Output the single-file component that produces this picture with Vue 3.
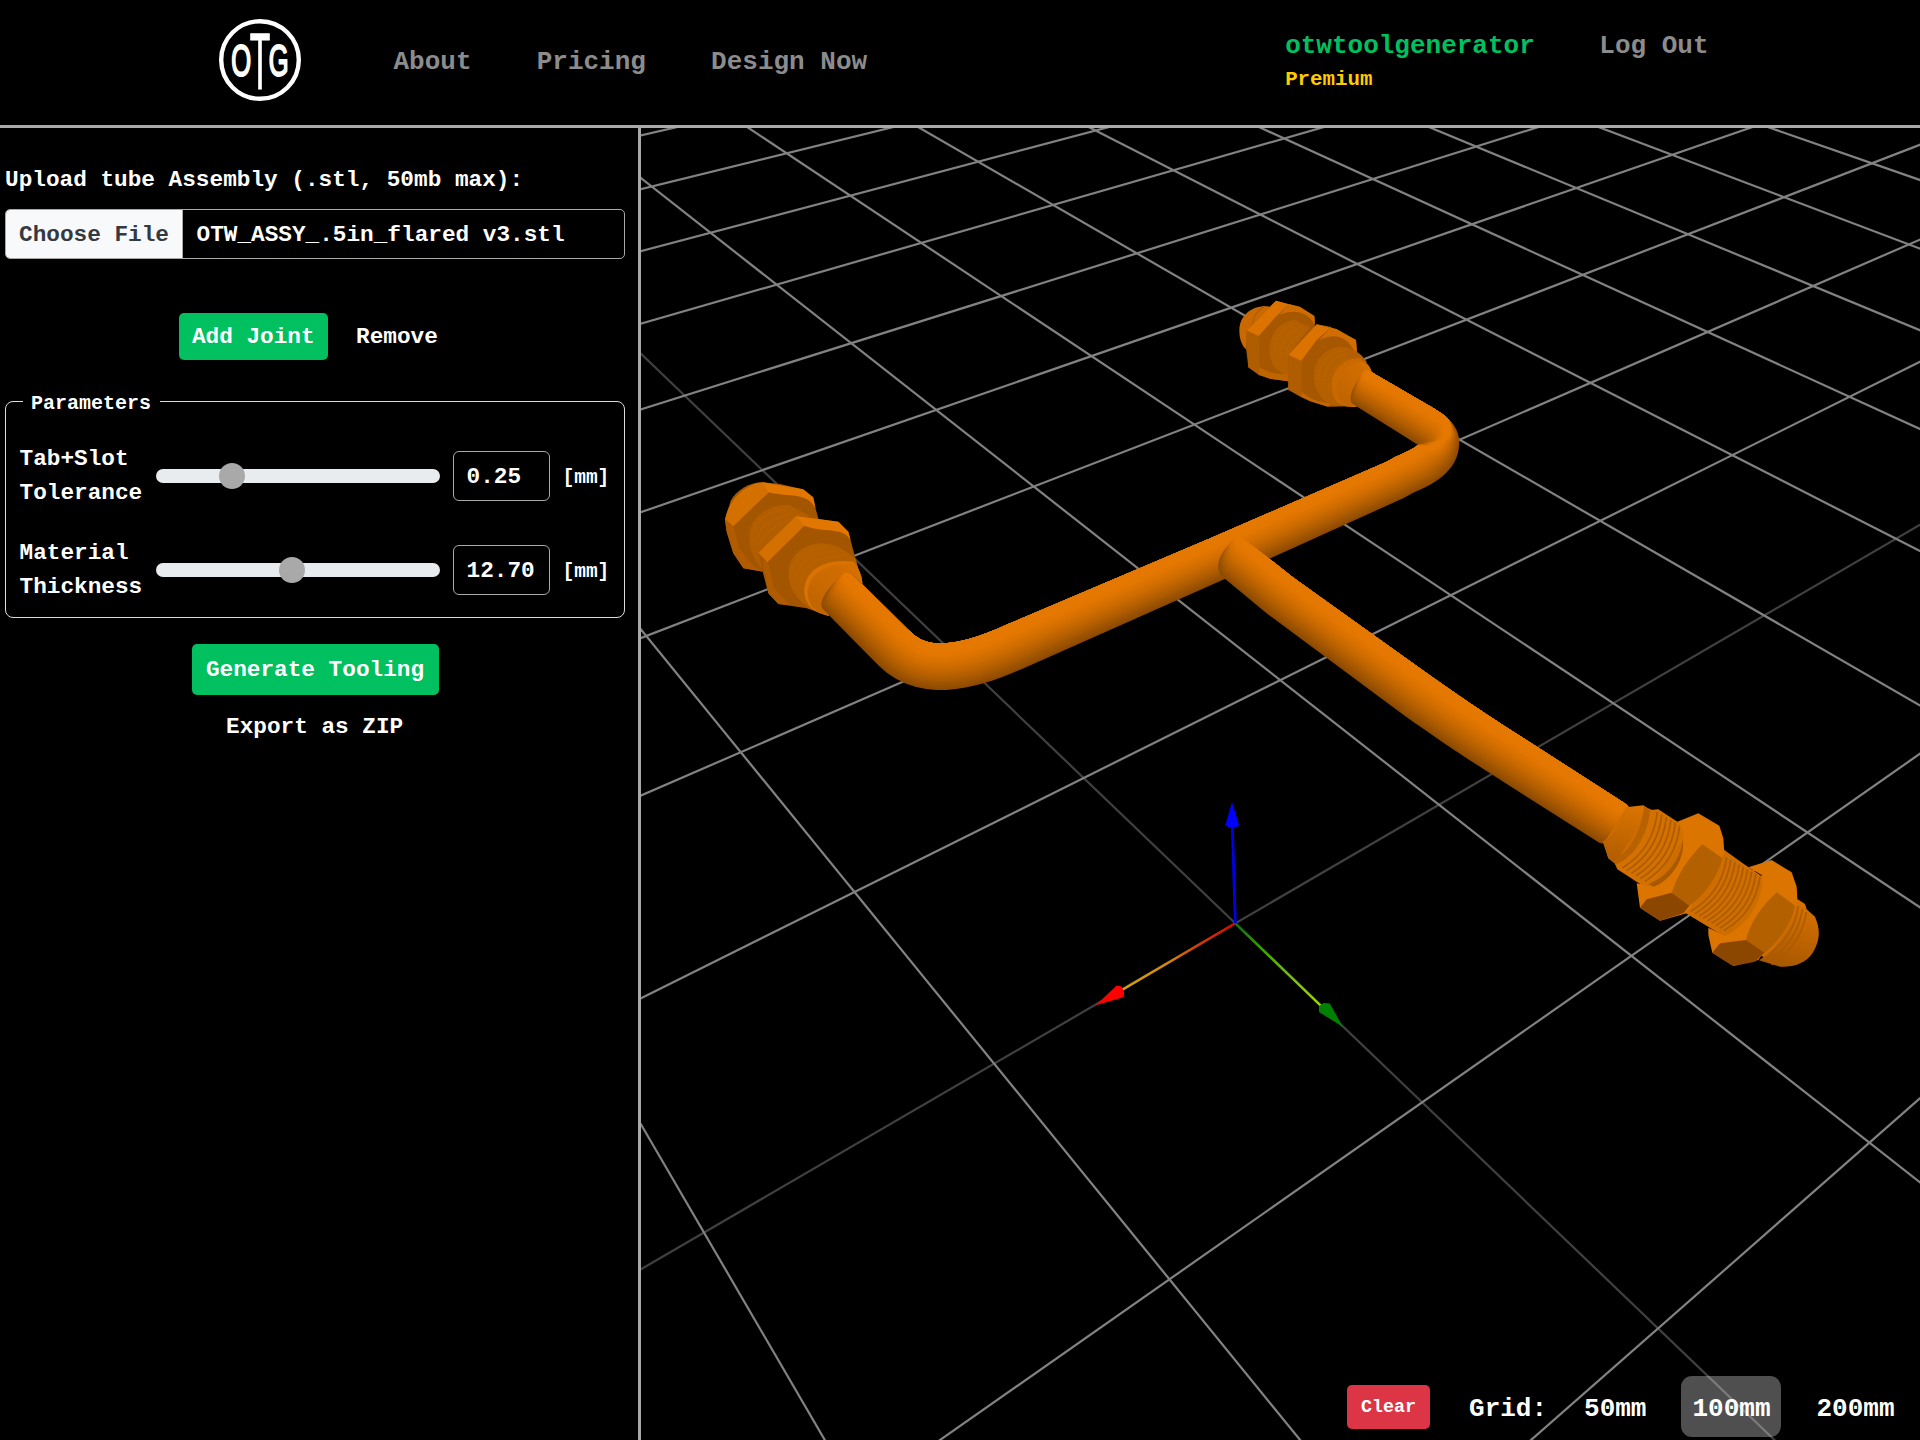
<script setup>
const nav = ['About', 'Pricing', 'Design Now']

const params = [
  { label: ['Tab+Slot', 'Tolerance'], value: '0.25', pos: 76 },
  { label: ['Material', 'Thickness'], value: '12.70', pos: 136 },
]

const gridSizes = [
  { label: '50mm', active: false },
  { label: '100mm', active: true },
  { label: '200mm', active: false },
]

// Perspective projection of the ground plane (grid units -> pixels)
const depth = (u, v) => 1 - 0.0843 * u - 0.104 * v
const project = (u, v) => {
  const w = depth(u, v)
  return [(-325 * u + 38.95 * v + 1235.3) / w, (50.72 * u + 64.4 * v + 923.3) / w]
}

function groundLine(fixed, along) {
  const pt = (t) => (along === 'v' ? [fixed, t] : [t, fixed])
  let end = 6
  while (depth(...pt(end)) < 0.15) end -= 0.25
  const [x1, y1] = project(...pt(-12))
  const [x2, y2] = project(...pt(end))
  return { x1, y1, x2, y2, axis: fixed === 0, key: along + fixed }
}

const lines = []
for (let i = -12; i <= 4; i++) {
  lines.push(groundLine(i, 'v'), groundLine(i, 'u'))
}
lines.sort((a, b) => Number(b.axis) - Number(a.axis))

// Tubes: sampled centre lines [x, y, radius], shaded by stacked inset outlines
function bezier(p0, p1, p2, p3, r0, r1, n = 16) {
  const out = []
  for (let i = 0; i <= n; i++) {
    const t = i / n
    const s = 1 - t
    const f = (k) => s * s * s * p0[k] + 3 * s * s * t * p1[k] + 3 * s * t * t * p2[k] + t * t * t * p3[k]
    out.push([f(0), f(1), r0 + (r1 - r0) * t])
  }
  return out
}

const header = [
  [839, 593, 22.8],
  [890, 644, 23.2],
  ...bezier([895, 649], [927, 681], [978, 663], [1015, 646.5], 23.3, 23.3),
  [1219, 558, 21.5],
  [1395, 480, 20],
  ...bezier([1404, 475], [1425, 466], [1439, 458], [1439.5, 443], 20, 19.8),
  ...bezier([1439.5, 441], [1438, 434], [1430, 429], [1420, 423], 19.8, 19.6),
  [1362, 388, 18.5],
]
const branch = [
  [1236, 560, 21.5],
  [1280, 595.5, 22.3],
  [1400, 683, 23.6],
  ...bezier([1420, 697.5], [1445, 715], [1465, 729], [1490, 745], 23.8, 23.8),
  [1612, 823, 23.5],
]

function outline(points, k, round) {
  const left = []
  const right = []
  let first, last
  points.forEach(([x, y, r], i) => {
    const a = points[Math.max(0, i - 1)]
    const b = points[Math.min(points.length - 1, i + 1)]
    const len = Math.hypot(b[0] - a[0], b[1] - a[1]) || 1
    const dx = (b[0] - a[0]) / len
    const dy = (b[1] - a[1]) / len
    const rr = r * (1 - k)
    const shift = r * k * Math.max(-1, Math.min(1, dx * 1.35))
    const cx = x + dy * shift
    const cy = y - dx * shift
    left.push([cx + dy * rr, cy - dx * rr])
    right.push([cx - dy * rr, cy + dx * rr])
    if (i === 0) first = [cx, cy, dx, dy, rr, r * round]
    last = [cx, cy, dx, dy, rr, r * 0.4]
  })
  const cap = ([x, y, dx, dy, r, reach], dir) => {
    const pts = []
    for (let i = 1; i < 12; i++) {
      const a = (i / 12) * Math.PI
      const side = Math.cos(a) * dir * r
      const fwd = Math.sin(a) * dir * reach
      pts.push([x + dy * side + dx * fwd, y - dx * side + dy * fwd])
    }
    return pts
  }
  const all = [...left, ...cap(last, 1), ...right.reverse(), ...cap(first, -1)]
  return 'M' + all.map((p) => p[0].toFixed(1) + ',' + p[1].toFixed(1)).join('L') + 'Z'
}

const STEPS = 18
function shade(points, round) {
  return Array.from({ length: STEPS }, (_, i) => {
    const t = i / (STEPS - 1)
    const e = 1 - Math.pow(1 - t, 1.45)
    const mix = (a, b) => Math.round(a + (b - a) * e)
    return { d: outline(points, t * 0.8, round), fill: `rgb(${mix(142, 229)},${mix(75, 120)},0)` }
  })
}
const tubes = [shade(header, 0.45), shade(branch, 0.7)]

const arcs = (n, x, y, dx, dy, cx, cy, ex, ey) =>
  Array.from({ length: n }, (_, i) => `M${x + dx * i},${y + dy * i}q${cx},${cy} ${ex},${ey}`).join('')
const ridgesA = arcs(6, 232, 96, 13.5, 8, -12, 110, -105, 168)
const ridgesB = arcs(9, 440, 232, 12.5, 7.2, -14, 106, -108, 162)
const ridgesC = arcs(3, 655, 378, 12, 9, -14, 98, -104, 158)
</script>

<template>
  <div class="app">
    <header class="topbar">
      <svg class="logo" viewBox="0 0 84 84">
        <circle cx="42" cy="42" r="38.8" fill="none" stroke="#fff" stroke-width="4.4" />
        <g class="mono" text-anchor="middle">
          <text transform="translate(23.2 58) scale(.58 1)" font-size="44">O</text>
          <text class="tee" transform="translate(42 71) scale(.42 1)" font-size="80">T</text>
          <text transform="translate(60.6 58) scale(.58 1)" font-size="44">G</text>
        </g>
      </svg>
      <nav class="links">
        <a v-for="n in nav" :key="n">{{ n }}</a>
      </nav>
      <div class="account">
        <div class="user">
          <span class="name">otwtoolgenerator</span>
          <span class="tier">Premium</span>
        </div>
        <a class="logout">Log Out</a>
      </div>
    </header>

    <main class="body">
      <aside class="side">
        <div class="label">Upload tube Assembly (.stl, 50mb max):</div>
        <div class="file">
          <span class="choose">Choose File</span>
          <span class="fname">OTW_ASSY_.5in_flared v3.stl</span>
        </div>
        <div class="joints">
          <button class="btn add">Add Joint</button>
          <button class="plain">Remove</button>
        </div>
        <section class="params">
          <span class="legend">Parameters</span>
          <div v-for="p in params" :key="p.value" class="row">
            <div class="plabel">
              <div v-for="l in p.label" :key="l">{{ l }}</div>
            </div>
            <div class="track"><span class="thumb" :style="{ left: p.pos + 'px' }"></span></div>
            <div class="num">{{ p.value }}</div>
            <span class="unit">[mm]</span>
          </div>
        </section>
        <button class="btn generate">Generate Tooling</button>
        <button class="plain export">Export as ZIP</button>
      </aside>

      <section class="view">
        <svg class="scene" viewBox="641 128 1279 1312">
          <defs>
            <linearGradient id="gx" gradientUnits="userSpaceOnUse" x1="1235" y1="923" x2="1122" y2="990">
              <stop offset="0" stop-color="#e00000" />
              <stop offset=".35" stop-color="#d84000" />
              <stop offset=".6" stop-color="#d88a00" />
              <stop offset="1" stop-color="#d8a400" />
            </linearGradient>
            <linearGradient id="gy" gradientUnits="userSpaceOnUse" x1="1235" y1="923" x2="1321" y2="1006">
              <stop offset="0" stop-color="#007800" />
              <stop offset=".5" stop-color="#5cb800" />
              <stop offset="1" stop-color="#a0dc00" />
            </linearGradient>
            <linearGradient id="dome" x1=".6" y1="0" x2=".4" y2="1">
              <stop offset="0" stop-color="#d87200" />
              <stop offset="1" stop-color="#a85800" />
            </linearGradient>
            <linearGradient id="cone" x1=".5" y1="0" x2=".3" y2="1">
              <stop offset="0" stop-color="#d97300" />
              <stop offset="1" stop-color="#b05c00" />
            </linearGradient>
            <linearGradient id="collar" x1="1" y1="0" x2="0" y2="1">
              <stop offset="0" stop-color="#d87100" />
              <stop offset="1" stop-color="#bd6300" />
            </linearGradient>
          </defs>

          <line
            v-for="l in lines"
            :key="l.key"
            :x1="l.x1"
            :y1="l.y1"
            :x2="l.x2"
            :y2="l.y2"
            :class="l.axis ? 'axis-line' : 'grid-line'"
          />

          <!-- origin arrows -->
          <g fill="none" stroke-width="2.4">
            <path d="M1235.3,923.3L1122,990" stroke="url(#gx)" />
            <path d="M1235.3,923.3L1321,1006" stroke="url(#gy)" />
            <path d="M1235.3,923.3L1232.3,826" stroke="#0000e6" stroke-width="2.8" />
          </g>
          <path d="M1095.7,1005.2L1116.7,985.5L1121.7,986.5L1124.2,993L1123.5,997.3Z" fill="#f00" />
          <path d="M1343,1027L1319,1012L1319,1006L1323.5,1003L1329.8,1003.6Z" fill="#008000" />
          <path d="M1232,802L1225.3,825.5Q1232,830 1239.2,825.5Z" fill="#00f" />

          <!-- upper fitting -->
          <g transform="translate(1220 280) scale(.33333)">
            <path d="M150,80C100,72 58,105 58,150C58,180 66,198 82,212L150,180Z" fill="#c96900" />
            <path d="M98,140C96,112 112,92 134,79" fill="none" stroke="#b66000" stroke-width="5" />
            <path d="M80,152L168,62L240,82L283,108L285,150L215,305L150,296L118,285L85,262L78,205Z" fill="#a65700" />
            <path d="M80,155L118,167L120,287L85,262Z" fill="#b05c00" />
            <path d="M80,152L168,62L206,73L166,112L116,168Z" fill="#dc7300" />
            <path d="M168,62L240,80L283,108L285,135C262,92 220,88 178,104L206,72Z" fill="#ce6c00" />
            <path d="M118,262C150,282 180,285 215,280L215,305L150,296L118,285Z" fill="#bf6500" />
            <path d="M148,215C146,160 185,120 225,120L270,142L205,225L205,285C170,278 150,252 148,215Z" fill="#b45f00" />
            <path class="speck" d="M165,215C165,170 190,142 225,134M182,225C182,180 205,160 240,145M198,235C198,200 212,180 238,165" />
            <path d="M205,225L290,133L330,140L408,180L412,225L425,378L330,380L245,352L205,330Z" fill="#a65700" />
            <path d="M205,226L245,241L245,352L205,328Z" fill="#b05c00" />
            <path d="M205,225L290,133L330,144L290,180L244,242Z" fill="#dc7300" />
            <path d="M290,133L350,147L408,180L412,232C385,165 345,158 298,180L330,144Z" fill="#d06d00" />
            <path d="M245,335C270,358 300,368 335,370L325,381L270,364L245,352Z" fill="#c56700" />
            <path d="M282,295C278,240 318,200 365,200C400,202 425,222 440,245L400,378L335,376C300,360 284,330 282,295Z" fill="#b45f00" />
            <path class="speck" d="M297,300C295,250 325,215 372,212M312,315C308,265 340,230 385,222M326,335C322,280 350,245 395,232" />
            <path d="M335,320C332,270 375,233 415,235C440,243 455,262 457,285L410,380C360,385 336,362 335,320Z" fill="#c96900" />
            <path d="M350,325C350,280 390,245 425,245C445,255 455,268 457,285L400,378C370,380 352,362 350,325Z" fill="url(#collar)" />
          </g>

          <!-- left fitting -->
          <g transform="translate(700 460) scale(.33333)">
            <path d="M75,180L92,122C110,90 150,66 188,67L240,72L305,87L338,115L355,175L300,260L190,335L130,325L100,280L80,215Z" fill="#a35500" />
            <path d="M75,178L100,198L118,265L160,318L190,335L130,325L100,280L80,215Z" fill="#b05b00" />
            <path d="M75,178C85,125 130,72 188,67L207,80L205,98L100,199Z" fill="#d47000" />
            <path d="M188,67L310,88L340,112L347,145C318,95 270,113 205,97Z" fill="#e27700" />
            <path d="M148,225C150,165 215,130 270,136L330,168L180,275L190,330C160,300 146,265 148,225Z" fill="#b15d00" />
            <path class="speck" d="M162,215C168,180 205,155 255,148M170,235C180,200 215,175 275,160M175,255C190,220 225,195 280,175" />
            <path d="M175,278L288,168L415,185L445,215L465,290L487,375L385,467L320,445L235,432L205,400L188,335Z" fill="#a35500" />
            <path d="M188,300L204,306L222,385L270,435L235,432L205,400Z" fill="#b05b00" />
            <path d="M175,278L288,168L322,188L295,215L202,307Z" fill="#d47000" />
            <path d="M288,168L415,185L445,215L452,240C425,198 375,220 312,197Z" fill="#e27700" />
            <path d="M266,330C275,270 325,250 370,250C410,252 450,280 468,300L487,370L385,467L330,445C290,420 262,380 266,330Z" fill="#b45f00" />
            <path class="speck" d="M280,325C290,280 335,262 385,262M290,345C300,300 345,275 405,275M302,365C310,315 355,288 425,288" />
            <path d="M313,400C308,330 375,293 462,305C475,325 487,345 487,372L385,467C345,460 318,440 313,400Z" fill="#d87200" />
            <path d="M323,405C318,345 385,300 465,315C478,330 487,350 487,372L385,467C350,460 328,440 323,405Z" fill="url(#collar)" />
          </g>

          <g v-for="(layers, i) in tubes" :key="i">
            <path v-for="(s, j) in layers" :key="j" :d="s.d" :fill="s.fill" />
          </g>

          <!-- lower right fitting -->
          <g transform="translate(1580 780) scale(.33333)">
            <path d="M137,88L190,78L292,125L433,210L505,262L653,360L680,500L600,558L430,466L316,398L170,305L85,235L72,188Z" fill="#cd6d00" />
            <path d="M68,185C100,165 135,120 137,82L190,76L210,90L105,250L85,235Z" fill="url(#cone)" />
            <path d="M105,252C150,235 200,170 210,90L235,88L292,125L320,160L215,318L170,305L112,268Z" fill="#d27000" />
            <path d="M103,238C150,215 185,150 192,78L210,90C205,165 160,235 105,254Z" fill="#b86100" />
            <path class="ridge" :d="ridgesA" />
            <path d="M292,125L355,100L418,137L430,175L433,220L320,400L240,422L180,383L170,310L215,318C280,300 315,220 310,155Z" fill="#dc7400" />
            <path d="M205,312C255,295 300,245 308,180C318,235 270,305 220,320Z" fill="#a85900" />
            <path d="M432,218L505,262L545,290L430,468L385,440L316,398C380,350 420,300 427,235Z" fill="#cf6e00" />
            <path class="ridge" :d="ridgesB" />
            <path d="M367,193L427,235C412,290 375,345 328,377L275,340C290,290 320,240 367,193Z" fill="#b26000" />
            <path d="M180,383L200,358L275,338L328,377L310,400L240,422Z" fill="#8b4700" />
            <path d="M505,262L575,240L635,277L650,320L653,370L535,540L460,558L397,518L385,465L385,443L435,467C500,440 555,360 545,285Z" fill="#dc7400" />
            <path d="M653,358L675,372L680,388L705,410C722,450 720,480 700,515C680,550 640,562 600,560L537,541C600,500 645,430 645,375Z" fill="url(#dome)" />
            <path class="ridge" :d="ridgesC" />
            <path d="M590,337L645,377C635,430 600,480 553,520L498,480C510,430 540,385 590,337Z" fill="#b26000" />
            <path d="M397,518L420,490L498,480L553,518L525,545L460,558Z" fill="#8b4700" />
          </g>
        </svg>

        <div class="controls">
          <button class="clear">Clear</button>
          <span class="glabel">Grid:</span>
          <button v-for="g in gridSizes" :key="g.label" class="size" :class="{ active: g.active }">{{ g.label }}</button>
        </div>
      </section>
    </main>
  </div>
</template>

<style>
body {
  background: #000;
}
</style>

<style scoped>
.app {
  width: 1920px;
  height: 1440px;
  display: flex;
  flex-direction: column;
  overflow: hidden;
  background: #000;
  color: #fff;
  font-family: 'Liberation Mono', monospace;
  font-weight: 700;
  font-size: 22.73px;
  line-height: 34px;
}
.app * {
  box-sizing: border-box;
}
button {
  font: inherit;
  color: inherit;
  background: none;
  border: 0;
  padding: 0;
  margin: 0;
  white-space: nowrap;
}
.topbar {
  height: 128px;
  flex: none;
  display: flex;
  align-items: flex-start;
  border-bottom: 3px solid #a9a9a9;
  padding-left: 218px;
}
.logo {
  width: 84px;
  height: 84px;
  margin-top: 18px;
  overflow: visible;
}
.mono {
  font-family: 'Liberation Sans', sans-serif;
  font-weight: 400;
  fill: #fff;
}
.mono text {
  stroke: #fff;
  stroke-width: 1.7px;
  stroke-linejoin: round;
  vector-effect: non-scaling-stroke;
}
.mono .tee {
  stroke-width: 0.9px;
}
.links {
  display: flex;
  gap: 65.2px;
  margin: 45px 0 0 91.5px;
  color: #8c8c8c;
  font-size: 26px;
}
.account {
  display: flex;
  gap: 64.5px;
  margin-left: auto;
  padding: 29px 211.5px 0 0;
  color: #8c8c8c;
  font-size: 26px;
}
.user {
  display: flex;
  flex-direction: column;
}
.name {
  color: #00c060;
}
.tier {
  color: #ffcc00;
  font-size: 20.8px;
}
.body {
  flex: 1;
  min-height: 0;
  display: flex;
}
.side {
  width: 641px;
  flex: none;
  display: flex;
  flex-direction: column;
  padding: 35px 13.5px 0 5px;
  border-right: 3px solid #a9a9a9;
}
.file {
  height: 50px;
  margin-top: 12px;
  display: flex;
  align-items: stretch;
  line-height: 50px;
  border: 1.5px solid #a9a9a9;
  border-radius: 5px;
  overflow: hidden;
}
.choose {
  width: 177px;
  padding-left: 13px;
  background: #f8f9fa;
  color: #343a42;
  border-right: 1px solid #a9a9a9;
}
.fname {
  padding-left: 13.5px;
}
.joints {
  display: flex;
  gap: 28px;
  margin: 54px 0 0 173.5px;
}
.btn {
  background: #00c060;
  border-radius: 5px;
}
.add {
  width: 149.5px;
  height: 47px;
}
.params {
  position: relative;
  height: 217px;
  margin-top: 41px;
  padding: 40px 0 0 13.5px;
  display: flex;
  flex-direction: column;
  gap: 26px;
  border: 1.5px solid #dcdcdc;
  border-radius: 8px;
}
.legend {
  position: absolute;
  left: 17px;
  top: -13px;
  padding: 0 9px 0 8px;
  background: #000;
  font-size: 20px;
  line-height: 30px;
}
.row {
  display: flex;
  align-items: center;
  height: 68px;
}
.plabel {
  width: 136.5px;
}
.track {
  position: relative;
  width: 284px;
  height: 14px;
  border-radius: 7px;
  background: #e9ecef;
}
.thumb {
  position: absolute;
  top: -6px;
  width: 26px;
  height: 26px;
  margin-left: -13px;
  border-radius: 50%;
  background: #a9a9a9;
}
.num {
  width: 97px;
  height: 50px;
  margin-left: 12.5px;
  padding-left: 13px;
  border: 1.5px solid #a9a9a9;
  border-radius: 6px;
  line-height: 50px;
}
.unit {
  margin: 4px 0 0 13px;
  font-size: 19.5px;
}
.generate {
  width: 247px;
  height: 51px;
  margin: 26px 0 0 186.5px;
}
.export {
  align-self: flex-start;
  height: 34px;
  margin: 15px 0 0 221px;
}
.view {
  position: relative;
  flex: 1;
  min-width: 0;
}
.scene {
  display: block;
  width: 1279px;
  height: 1312px;
}
.grid-line {
  stroke: #828282;
  stroke-width: 2.2;
}
.axis-line {
  stroke: #404040;
  stroke-width: 2.2;
}
.speck {
  fill: none;
  stroke: #c06500;
  stroke-width: 3.5;
  stroke-dasharray: 7 5;
}
.ridge {
  fill: none;
  stroke: #ac5b00;
  stroke-width: 5;
}
.controls {
  position: absolute;
  right: 14.5px;
  bottom: 3px;
  height: 61px;
  display: flex;
  align-items: center;
  font-size: 26px;
}
.clear {
  width: 83px;
  height: 44px;
  margin-right: 39px;
  border-radius: 5px;
  background: #dc3545;
  font-size: 18.3px;
}
.glabel {
  margin: 5px 26px 0 0;
}
.size {
  height: 61px;
  padding: 5px 11px 0;
  border-radius: 11px;
}
.size + .size {
  margin-left: 24px;
}
.active {
  background: rgba(255, 255, 255, 0.31);
}
</style>
